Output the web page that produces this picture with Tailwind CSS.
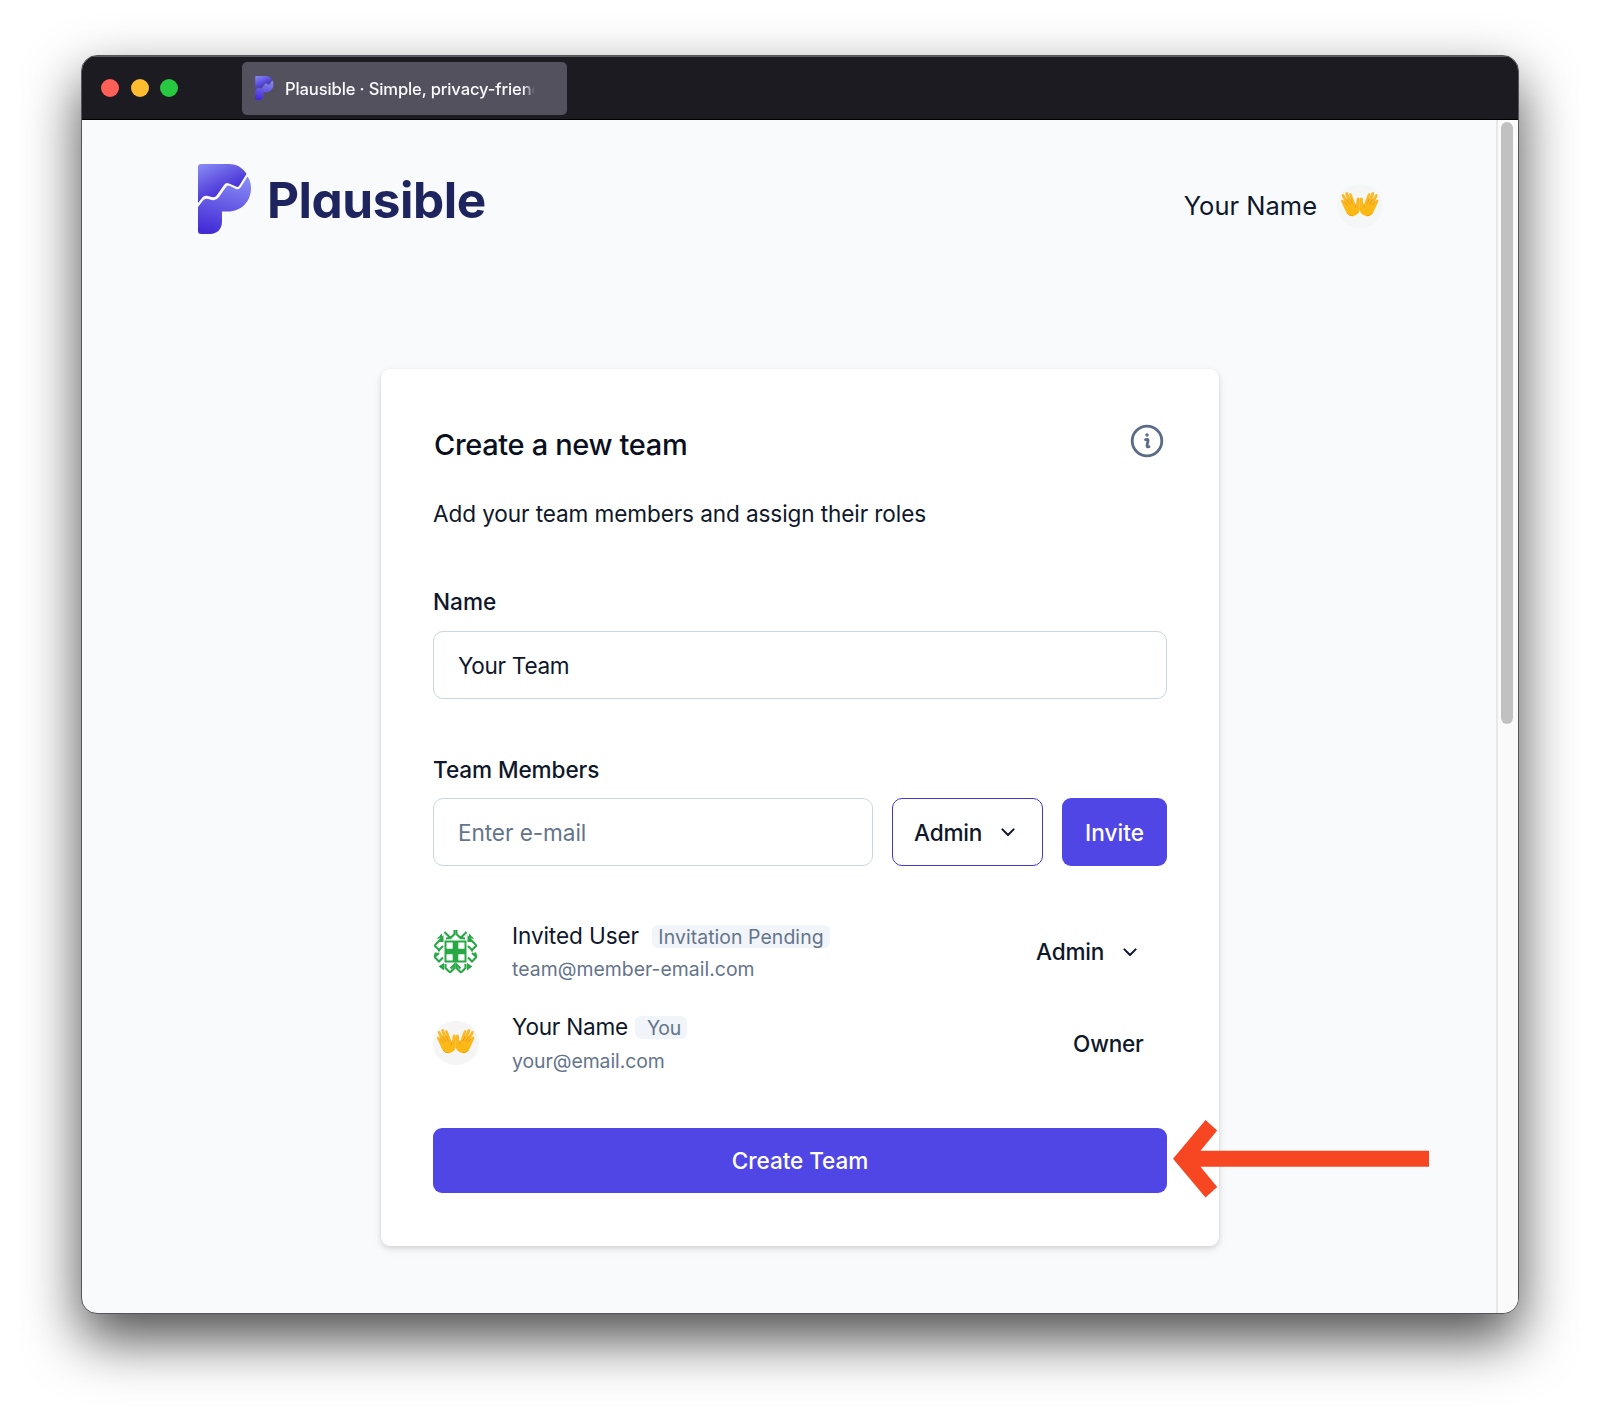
<!DOCTYPE html>
<html lang="en">
<head>
<meta charset="utf-8">
<title>Plausible · Create a new team</title>
<script src="https://cdn.jsdelivr.net/npm/@tailwindcss/browser@4"></script>
</head>
<body class="bg-white font-['Inter',sans-serif] text-[#0f172a] h-[1423px] overflow-hidden">
<svg width="0" height="0" class="absolute">
  <defs>
    <linearGradient id="ga" x1="0" y1="0" x2=".6" y2="1"><stop offset="0" stop-color="#8b8df5"/><stop offset=".75" stop-color="#4a35d8"/></linearGradient>
    <linearGradient id="gb" x1=".6" y1="0" x2=".35" y2="1"><stop offset="0" stop-color="#8688f3"/><stop offset="1" stop-color="#432cd6"/></linearGradient>
    <linearGradient id="gh" x1="0" y1="0" x2="0" y2="1"><stop offset="0" stop-color="#f9b92b"/><stop offset="1" stop-color="#fdb80e"/></linearGradient>
    <clipPath id="round"><circle cx="22.500" cy="22.500" r="22.500"/></clipPath>
    <symbol id="logo" viewBox="0 0 54 70">
      <path fill="url(#ga)" d="M3 0H31C39 0 45 4 48.500 10L41 22Q40 23.500 38 22.500L31 19.500Q28 18 26 21L19 31Q17 34 14 33L9 31.800Q6 31 4 34L0 39V3Q0 0 3 0Z"/>
      <path fill="url(#gb)" d="M49.500 12.500C52 16 53 20 53 24C53 38 43 47.500 30 47.500H24V58C24 65 19 70 12 70H3Q0 70 0 67V43L5 36.500Q7 34 10 35L14 36Q18 37 21 33L28 23Q29.500 20.500 32 22L38 25Q41 26 43 23Z"/>
    </symbol>
    <symbol id="hands" viewBox="0 0 46 44">
      <g id="hand">
        <path fill="url(#gh)" d="M4.200 17.500Q3.600 15.800 4.900 15.500Q5.700 15.400 6.300 16.200L8 18.500L4.900 12Q4.400 10.400 5.600 10Q6.700 9.700 7.500 11.200L10.500 16.500L8.300 10Q8 8.400 9.200 8.100Q10.500 7.900 11.200 9.500L13.800 15.800L12.200 10.500Q12 9 13.100 8.900Q14.200 8.900 14.800 10.400L18.500 20.500L19.300 21L19.500 15.500Q19.800 13.500 21.200 13.500Q22.800 13.500 22.800 15.500V26.500Q22.400 28.500 19.500 30.800Q16.500 32.800 13 31.800Q10.500 31 9 28Z"/>
        <path fill="none" stroke="#e08f1c" stroke-width=".6" d="M7.200 17.200L10.500 21.500M9.500 15L13 20.500M13.300 15L15.500 20M19.500 19.500Q18 21.500 18.300 24M10 29Q11.500 32 15.500 31.700"/>
      </g>
      <use href="#hand" transform="translate(45.500 0) scale(-1 1)"/>
    </symbol>
    <symbol id="chev" viewBox="0 0 14 9"><path d="M1.400 1.400L7 7L12.600 1.400" fill="none" stroke="currentColor" stroke-width="2" stroke-linecap="round" stroke-linejoin="round"/></symbol>
  </defs>
</svg>

<div class="relative pt-[55px] pl-[81px]">
<div class="w-[1438px] h-[1259px] rounded-[16px] border border-[#55565a] overflow-hidden bg-[#f9fafc] shadow-[0_25px_56px_rgba(0,0,0,0.7)]">
  <header class="h-[64px] bg-[#1c1b22] border-t border-[#5b5d61] border-b border-b-black flex items-center">
    <div class="flex gap-[11.500px] pl-[19px] w-[160px] -mt-px">
      <span class="size-[18px] rounded-full bg-[#ff5f57]"></span>
      <span class="size-[18px] rounded-full bg-[#febc2e]"></span>
      <span class="size-[18px] rounded-full bg-[#28c840]"></span>
    </div>
    <div class="w-[325px] h-[53px] rounded-[5px] bg-[#53515e] flex items-center pl-[13px] mt-px">
      <svg class="w-[19px] h-[24px] -mt-[2px]"><use href="#logo"/></svg>
      <div class="ml-[11px] mt-px w-[249px] overflow-hidden whitespace-nowrap text-[16.600px] tracking-[-0.140px] font-medium text-[#fbfbfe] leading-[24px] mask-r-from-[238px] mask-r-to-[250px]">Plausible · Simple, privacy-friend</div>
    </div>
  </header>

  <div class="flex h-[1193px]">
    <main class="w-[1414px]">
      <nav class="flex items-start justify-between pl-[116px] pr-[113px] pt-[44px] h-[249px]">
        <div class="flex items-start">
          <svg class="w-[54px] h-[70px]"><use href="#logo"/></svg>
          <span class="ml-[15px] mt-[6px] leading-[60px] text-[49.500px] tracking-[-0.450px] font-bold text-[#1e245e] [font-feature-settings:'cv11'] whitespace-nowrap">Plausible</span>
        </div>
        <div class="flex items-center mt-[20px] h-[44px]">
          <span class="text-[25.500px] whitespace-nowrap">Your Name</span>
          <span class="ml-[20px] w-[46px] h-[44px] rounded-full bg-[#f5f6f6]"><svg class="w-[46px] h-[44px]"><use href="#hands"/></svg></span>
        </div>
      </nav>

      <section class="ml-[299px] w-[838px] h-[877px] rounded-[9px] bg-white px-[52px] pt-[55px] shadow-[0_2px_5px_rgba(0,0,0,0.13),0_4px_12px_rgba(0,0,0,0.05)] text-[22.600px] whitespace-nowrap">
        <div class="flex justify-between h-[40px]">
          <h1 class="pl-px text-[29px] leading-[42px] font-medium tracking-[-0.340px] text-[#0b1020]">Create a new team</h1>
          <svg class="size-[34px] mr-[3px] text-[#5b6b87]" viewBox="0 0 34 34" fill="none" stroke="currentColor">
            <circle cx="17" cy="17" r="14.800" stroke-width="2.800"/>
            <circle cx="17" cy="11" r="1.700" fill="currentColor" stroke="none"/>
            <path d="M15.500 15.600Q18.600 14.700 18 17.200L17.100 21Q16.600 23.700 19 22.700" stroke-width="2.800" stroke-linecap="round"/>
          </svg>
        </div>
        <p class="mt-[34px] leading-[32px] tracking-[-0.110px]">Add your team members and assign their roles</p>
        <div class="mt-[56px] leading-[32px] font-medium">Name</div>
        <div class="mt-[13px] h-[68px] rounded-[10px] border-[1.500px] border-[#cbd5e1] px-[24px] leading-[67px] tracking-[-0.300px]">Your Team</div>
        <div class="mt-[54px] leading-[33px] h-[32px] font-medium tracking-[-0.100px]">Team Members</div>
        <div class="mt-[13px] h-[68px] flex leading-[67px]">
          <div class="w-[440px] rounded-[10px] border border-[#cbd5e1] px-[24px] text-[#64748b] tracking-[-0.080px]">Enter e-mail</div>
          <div class="ml-[19px] w-[151px] rounded-[10px] border-[1.500px] border-[#4338ca] pl-[21px] flex items-center font-medium tracking-[-0.200px]"><span class="w-[87px]">Admin</span><svg class="w-[14px] h-[9px] mt-px"><use href="#chev"/></svg></div>
          <div class="ml-[19px] w-[105px] rounded-[9px] bg-[#4f46e5] text-white text-center leading-[69px] font-medium">Invite</div>
        </div>

        <div class="mt-[54px] h-[66px] flex">
          <svg class="w-[45px] h-[45px] mt-[9px] mr-px" viewBox="0 0 45 45">
            <g clip-path="url(#round)" fill="none" stroke="#28a745" stroke-width="2.100">
              <path fill="#28a745" stroke="none" fill-rule="evenodd" d="M11.500 11.500H33.500V33.500H11.500ZM13.500 13.500V19.700H19.700V13.500ZM25.300 13.500V19.700H31.500V13.500ZM13.500 25.300V31.500H19.700V25.300ZM25.300 25.300V31.500H31.500V25.300Z"/>
              <g id="ring">
                <path d="M12 1V3.500L17.500 9L21.500 5V1M17.500 9L13 9.500"/>
                <path d="M10.500 12H6L1.500 16.500L6 21L10 17M6 21V22.500"/>
                <path d="M3 23.500L1.500 28L6 32.500L10 28.500M6 24L1.500 28"/>
                <path d="M12.500 35V39L17 43.500L21.500 39V35.500L17.500 39.500"/>
                <path d="M3 9L8.500 8M8 3V8"/>
                <path fill="#28a745" stroke="none" d="M5 11.500L10.500 6V11.500ZM11 34V41.500L5.500 37.500Z"/>
              </g>
              <use href="#ring" transform="translate(45 0) scale(-1 1)"/>
            </g>
          </svg>
          <div class="ml-[33px]">
            <div class="flex items-center h-[32px]"><span class="w-[140px] tracking-[-0.100px]">Invited User</span><span class="h-[23px] w-[178px] rounded-[6px] bg-[#f1f5f9] text-[#64748b] text-[19.400px] leading-[24px] text-center tracking-[0.080px]">Invitation Pending</span></div>
            <div class="text-[19.400px] leading-[34px] text-[#64748b] tracking-[0.030px]">team@member-email.com</div>
          </div>
          <div class="ml-auto h-[63px] flex items-center pr-[30px] font-medium tracking-[-0.200px]"><span class="w-[87px]">Admin</span><svg class="w-[14px] h-[9px] mt-px"><use href="#chev"/></svg></div>
        </div>
        <div class="mt-[25px] h-[68px] flex">
          <span class="mt-[10px] w-[46px] h-[44px] rounded-full bg-[#f5f5f5]"><svg class="w-[46px] h-[44px]"><use href="#hands"/></svg></span>
          <div class="ml-[33px]">
            <div class="flex items-center h-[32px]"><span class="w-[123px] tracking-[-0.220px]">Your Name</span><span class="h-[23px] w-[52px] rounded-[6px] bg-[#f1f5f9] text-[#64748b] text-[19.400px] leading-[24px] pl-[12px] tracking-[-0.300px]">You</span></div>
            <div class="text-[19.400px] leading-[36px] text-[#64748b] tracking-[-0.050px]">your@email.com</div>
          </div>
          <div class="ml-auto h-[65px] flex items-center pr-[23.500px] font-medium tracking-[-0.250px]">Owner</div>
        </div>
        <div class="mt-[49px] h-[65px] rounded-[9px] bg-[#4f46e5] text-white text-center leading-[66px] font-medium tracking-[-0.080px]">Create Team</div>
      </section>
    </main>
    <aside class="w-[22px] border-l-2 border-[#e8e8e8] bg-[#fafafa] pl-[3px] pt-[2px]"><div class="w-[12px] h-[602px] rounded-full bg-[#c1c1c1]"></div></aside>
  </div>
</div>
<!-- pointer to the submit button -->
<svg class="absolute left-[1172px] top-[1120px] w-[258px] h-[78px]" viewBox="0 0 258 78"><path fill="#f64722" d="M1 38.700L33.500 0L45.200 10.400L28.500 30.700H257V46.700H28.500L45.200 67L33.500 77.500Z"/></svg>
</div>
</body>
</html>
